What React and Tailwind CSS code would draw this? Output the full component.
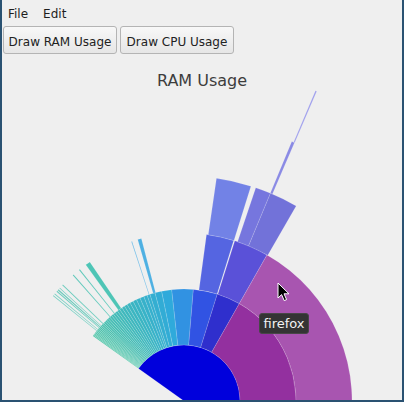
const CX = 184;
const CY = 401;

function pt(r, a) {
  const t = (a * Math.PI) / 180;
  return [CX + r * Math.sin(t), CY - r * Math.cos(t)];
}

function arcPath(r0, r1, a0, a1) {
  const large = a1 - a0 > 180 ? 1 : 0;
  const [x1, y1] = pt(r1, a0);
  const [x2, y2] = pt(r1, a1);
  if (r0 === 0) {
    return `M${CX},${CY} L${x1},${y1} A${r1},${r1} 0 ${large} 1 ${x2},${y2} Z`;
  }
  const [x3, y3] = pt(r0, a1);
  const [x4, y4] = pt(r0, a0);
  return `M${x1},${y1} A${r1},${r1} 0 ${large} 1 ${x2},${y2} L${x3},${y3} A${r0},${r0} 0 ${large} 0 ${x4},${y4} Z`;
}

function hex(c) {
  return [1, 3, 5].map((i) => parseInt(c.slice(i, i + 2), 16));
}

function mix(a, b, f) {
  const A = hex(a);
  const B = hex(b);
  return `rgb(${A.map((v, i) => Math.round(v + (B[i] - v) * f)).join(",")})`;
}

function tealAt(f) {
  if (f < 0.55) return mix("#53c6a9", "#3ab5c3", f / 0.55);
  return mix("#3ab5c3", "#2ea8de", (f - 0.55) / 0.45);
}

const tealBounds = [
  -54.5, -53.9, -53.3, -52.7, -52.0, -51.3, -50.6, -49.9, -49.1, -48.3, -47.5,
  -46.6, -45.7, -44.7, -43.7, -42.6, -41.5, -40.3, -39.1, -37.8, -36.5, -35.1,
  -33.6, -32.1, -30.5, -28.8, -27.0, -25.1, -23.1, -21.0, -19.2, -17.7, -15.0,
  -11.5, -6.3,
];

const R = [0, 56, 112, 168, 225, 281, 337];

const slices = [
  // centre
  { r: 0, a0: -54.5, a1: 180, c: "#0000dc" },
  // ring 1
  ...tealBounds.slice(0, -1).map((a, i) => ({
    r: 1,
    a0: a,
    a1: tealBounds[i + 1],
    c: tealAt((a + tealBounds[i + 1]) / 2 / -48.2 * -1 + 54.5 / 48.2 - 0),
  })),
  { r: 1, a0: -6.3, a1: 4.8, c: "#3192e2" },
  { r: 1, a0: 4.8, a1: 17.3, c: "#3153e3" },
  { r: 1, a0: 17.3, a1: 29.6, c: "#2f2fcd" },
  { r: 1, a0: 29.6, a1: 180, c: "#93309f" },
  // ring 2
  { r: 2, a0: -51.3, a1: -51.0, c: "#6ccabc" },
  { r: 2, a0: -50.5, a1: -50.2, c: "#6ccabc" },
  { r: 2, a0: -49.4, a1: -49.0, c: "#6ccabc" },
  { r: 2, a0: -48.8, a1: -48.3, c: "#6ccabc" },
  { r: 2, a0: -47.9, a1: -47.6, c: "#6ccabc" },
  { r: 2, a0: -46.5, a1: -46.1, c: "#6ccabc" },
  { r: 2, a0: -41.5, a1: -41.1, c: "#5cc6b8" },
  { r: 2, a0: -38.7, a1: -38.3, c: "#5cc6b8" },
  { r: 2, a0: -35.8, a1: -34.1, c: "#4ec5b6" },
  { r: 2, a0: -18.3, a1: -18.0, c: "#6ab8e4" },
  { r: 2, a0: -16.0, a1: -14.7, c: "#4eb0e2" },
  { r: 2, a0: 7.7, a1: 17.2, c: "#5565e1" },
  { r: 2, a0: 17.6, a1: 29.6, c: "#5a51d8" },
  { r: 2, a0: 29.6, a1: 180, c: "#a855b0" },
  // ring 3
  { r: 3, a0: 8.3, a1: 17.3, c: "#7282e6" },
  { r: 3, a0: 18.6, a1: 22.6, c: "#7676de" },
  { r: 3, a0: 22.6, a1: 29.9, c: "#7272d9" },
  // ring 4 / 5
  { r: 4, a0: 22.55, a1: 23.15, c: "#8a8ae4" },
  { r: 5, a0: 22.95, a1: 23.2, c: "#a0a0ec" },
];

function Sunburst() {
  return (
    <svg width="400" height="310" viewBox="2 90 400 310" className="block">
      {slices.map((s, i) => (
        <path
          key={i}
          d={arcPath(R[s.r], R[s.r + 1], s.a0, s.a1)}
          fill={s.c}
          stroke="rgba(255,255,255,0.28)"
          strokeWidth="0.5"
        />
      ))}
    </svg>
  );
}

function Cursor() {
  return (
    <svg width="14" height="21" viewBox="0 0 14 21">
      <path
        d="M1,1 L1,16 L4.6,12.6 L7.2,18.6 L9.6,17.6 L7,11.8 L12,11.8 Z"
        fill="#000"
        stroke="#fff"
        strokeWidth="1"
        strokeLinejoin="round"
      />
    </svg>
  );
}

export default function App() {
  return (
    <div className="relative flex flex-col w-[404px] h-[402px] overflow-hidden bg-[#efefef] border-x-2 border-b-2 border-[#2a5272] font-['DejaVu_Sans',sans-serif]">
      <div className="flex h-[24px] pt-[7px] text-[12px] leading-[14px] text-[#1e1e1e]">
        <span className="px-[6px]">File</span>
        <span className="ml-[3px] px-[6px]">Edit</span>
      </div>
      <div className="flex gap-[3px] pl-[1px] pt-[2px]">
        <button className="flex items-center justify-center w-[114px] h-[28px] pt-[4px] rounded-[3px] border border-[#b4b4b4] bg-linear-to-b from-[#f8f8f8] to-[#e6e6e6] text-[12px] leading-[14px] text-[#222]">
          Draw RAM Usage
        </button>
        <button className="flex items-center justify-center w-[114px] h-[28px] pt-[4px] rounded-[3px] border border-[#b4b4b4] bg-linear-to-b from-[#f8f8f8] to-[#e6e6e6] text-[12px] leading-[14px] text-[#222]">
          Draw CPU Usage
        </button>
      </div>
      <div className="mt-[17px] text-center text-[16px] leading-[19px] text-[#3d3d3d]">
        RAM Usage
      </div>
      <div className="flex-1 overflow-hidden">
        <Sunburst />
      </div>

      <div className="absolute left-[257px] top-[313px] flex items-center justify-center w-[50px] h-[21px] rounded-[3px] bg-[#343434] border border-[#474747] text-[13px] leading-[15px] text-[#f2f2f2]">
        firefox
      </div>
      <div className="absolute left-[275px] top-[282px] leading-none">
        <Cursor />
      </div>
    </div>
  );
}
